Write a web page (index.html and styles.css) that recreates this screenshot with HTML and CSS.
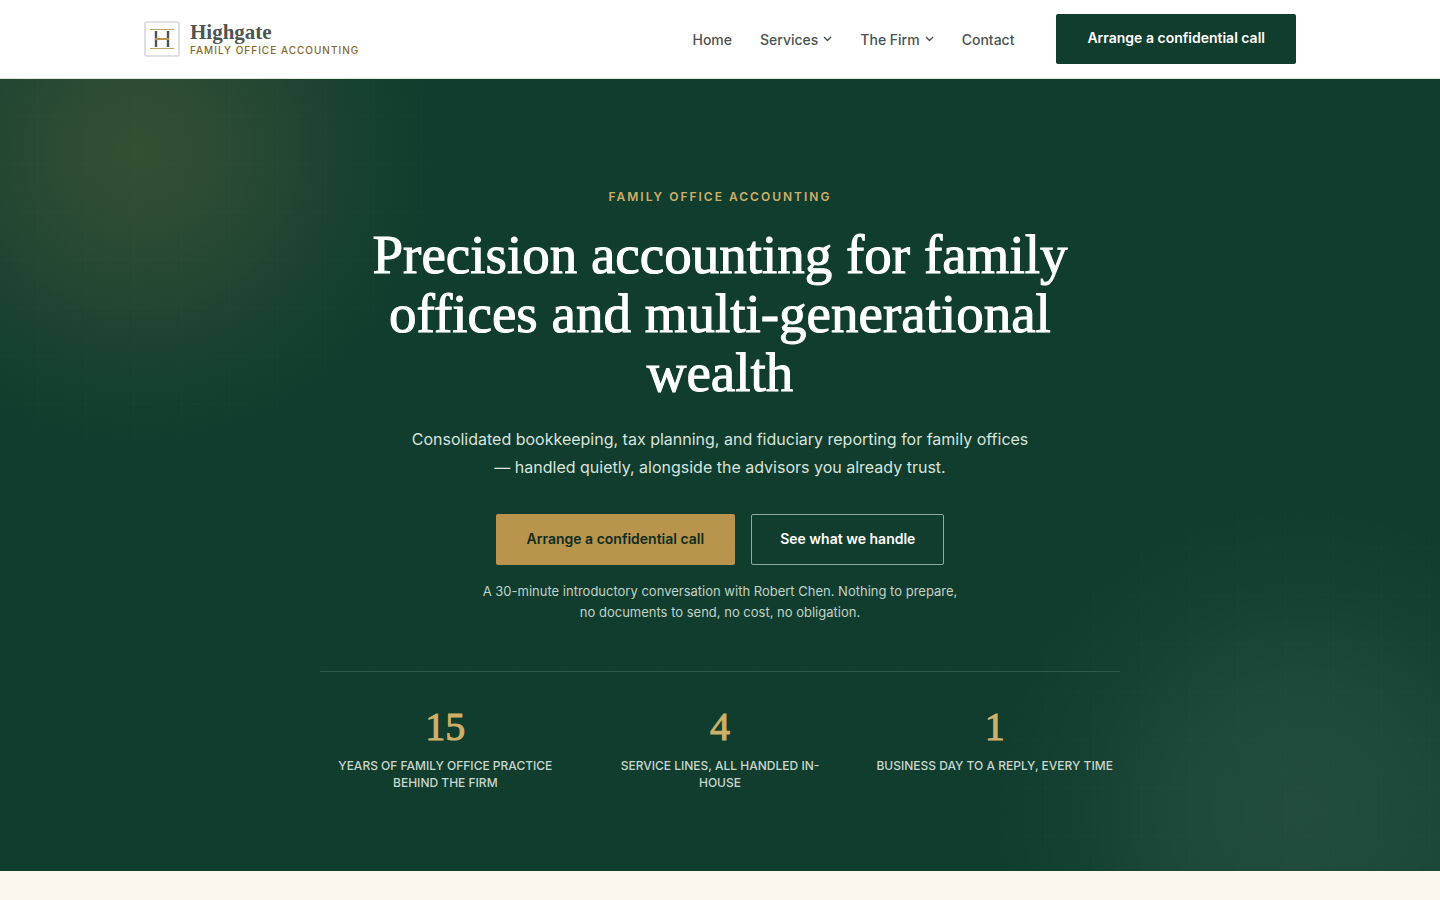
FILE: index.html
```html
<!DOCTYPE html>
<html lang="en">
<head>
	<meta charset="utf-8">
	<meta name="viewport" content="width=device-width, initial-scale=1">
	<title>Highgate | Family Office Accounting</title>
	<link rel="stylesheet" href="styles.css">
</head>
<body>
	<header class="site-header">
		<div class="container header-inner">
			<a class="brand" href="#">
				<svg class="brand-mark" width="36" height="36" viewBox="0 0 36 36" fill="none" aria-hidden="true">
					<rect x="1" y="1" width="34" height="34" rx="1.5" stroke="#d6d7db" stroke-width="1.6"/>
					<path d="M6 8.5h24M6 27.5h24" stroke="#c5a562" stroke-width="1"/>
					<path d="M12 10v16M24 10v16" stroke="#4d5552" stroke-width="2.4"/>
					<path d="M11 18h14" stroke="#b8934a" stroke-width="2"/>
				</svg>
				<span class="brand-text">
					<span class="brand-name">Highgate</span>
					<span class="brand-tag">Family Office Accounting</span>
				</span>
			</a>
			<nav class="nav">
				<a href="#">Home</a>
				<a href="#">Services
					<svg width="9" height="6" viewBox="0 0 9 6" fill="none" aria-hidden="true"><path d="M1 1l3.5 3.5L8 1" stroke="currentColor" stroke-width="1.4"/></svg>
				</a>
				<a href="#">The Firm
					<svg width="9" height="6" viewBox="0 0 9 6" fill="none" aria-hidden="true"><path d="M1 1l3.5 3.5L8 1" stroke="currentColor" stroke-width="1.4"/></svg>
				</a>
				<a href="#">Contact</a>
				<a class="btn btn-green" href="#">Arrange a confidential call</a>
			</nav>
		</div>
	</header>

	<main>
		<section class="hero">
			<div class="hero-inner">
				<p class="eyebrow">Family Office Accounting</p>
				<h1>Precision accounting for family offices and multi-generational wealth</h1>
				<p class="lead">Consolidated bookkeeping, tax planning, and fiduciary reporting for family offices — handled quietly, alongside the advisors you already trust.</p>
				<div class="actions">
					<a class="btn btn-gold" href="#">Arrange a confidential call</a>
					<a class="btn btn-outline" href="#">See what we handle</a>
				</div>
				<p class="note">A 30-minute introductory conversation with Robert Chen. Nothing to prepare, no documents to send, no cost, no obligation.</p>
				<div class="stats">
					<div class="stat">
						<span class="stat-num">15</span>
						<span class="stat-label">Years of family office practice behind the firm</span>
					</div>
					<div class="stat">
						<span class="stat-num">4</span>
						<span class="stat-label">Service lines, all handled in-house</span>
					</div>
					<div class="stat">
						<span class="stat-num">1</span>
						<span class="stat-label">Business day to a reply, every time</span>
					</div>
				</div>
			</div>
		</section>
	</main>
</body>
</html>
```
FILE: styles.css
```css
*{
	box-sizing:border-box;
}
body{
	margin:0;
	background:#faf7ee;
	font-family:Inter, "Liberation Sans", sans-serif;
	color:#4a524e;
}
a{
	color:inherit;
	text-decoration:none;
}
.container{
	max-width:1200px;
	margin:0 auto;
	padding:0 24px;
}

/* header */
.site-header{
	background:#fff;
	border-bottom:1px solid #dfe5d8;
}
.header-inner{
	display:flex;
	align-items:center;
	justify-content:space-between;
	min-height:78px;
}
.brand{
	display:flex;
	align-items:center;
	gap:10px;
}
.brand-text{
	display:flex;
	flex-direction:column;
}
.brand-name{
	font-family:"Liberation Serif", serif;
	font-size:21px;
	line-height:22px;
	font-weight:700;
	color:#4d5552;
}
.brand-tag{
	font-size:10px;
	line-height:14px;
	font-weight:500;
	letter-spacing:1px;
	text-transform:uppercase;
	color:#86682a;
}
.nav{
	display:flex;
	align-items:center;
	gap:28px;
	font-size:14px;
	font-weight:500;
}
.nav a{
	display:flex;
	align-items:center;
	gap:5px;
}
.nav .btn{
	margin-left:14px;
}

/* buttons */
.btn{
	display:flex;
	align-items:center;
	justify-content:center;
	min-height:50px;
	padding:0 30px 3px;
	border:1px solid transparent;
	border-radius:2px;
	font-size:14px;
	font-weight:600;
}
.btn-green{
	background:#103d2e;
	color:#fff;
}
.btn-gold{
	background:#b8944c;
	color:#0f2d20;
}
.btn-outline{
	padding:0 28px 3px;
	border-color:#8fab9f;
	color:#fff;
}

/* hero, with two soft glows and a faint 48px grid */
.hero{
	padding:108px 24px 80px;
	color:#fff;
	text-align:center;
	background:
		linear-gradient(rgba(255,255,255,.012) 1px, transparent 1px) 0 36px / 48px 48px,
		linear-gradient(90deg, rgba(255,255,255,.012) 1px, transparent 1px) 37px 0 / 48px 48px,
		radial-gradient(circle 300px at 138px 72px, rgba(184,148,76,.21), rgba(184,148,76,.15) 35%, rgba(184,148,76,.05) 70%, transparent),
		radial-gradient(circle 310px at calc(100% - 140px) calc(100% - 60px), rgba(255,255,255,.08), rgba(255,255,255,.06) 40%, rgba(255,255,255,.02) 72%, transparent),
		#103d2e;
}
.hero-inner{
	max-width:800px;
	margin:0 auto;
}
.eyebrow{
	margin:0 0 18px;
	font-size:12px;
	line-height:20px;
	font-weight:600;
	letter-spacing:2px;
	text-transform:uppercase;
	color:#cfb069;
}
h1{
	margin:0 auto 23px;
	max-width:720px;
	font-family:"Liberation Serif", serif;
	font-size:55px;
	line-height:59px;
	font-weight:400;
	-webkit-text-stroke:1px currentColor;
}
.lead{
	margin:0 auto 33px;
	max-width:630px;
	font-size:16px;
	line-height:28px;
	color:#d9e3dc;
}
.actions{
	display:flex;
	justify-content:center;
	flex-wrap:wrap;
	gap:16px;
}
.actions .btn{
	min-height:51px;
}
.note{
	margin:16px auto 48px;
	max-width:480px;
	font-size:13px;
	line-height:21px;
	color:#c3d2c9;
}
.stats{
	display:grid;
	grid-template-columns:repeat(3, 1fr);
	gap:24px;
	padding-top:33px;
	border-top:1px solid #2f5848;
}
.stat{
	display:flex;
	flex-direction:column;
}
.stat-num{
	margin-bottom:8px;
	font-family:"Liberation Serif", serif;
	font-size:40px;
	line-height:44px;
	font-weight:400;
	-webkit-text-stroke:1px currentColor;
	color:#cfb069;
}
.stat-label{
	padding:0 6px;
	font-size:12px;
	line-height:17px;
	font-weight:500;
	text-transform:uppercase;
	color:#c9d7cf;
}

@media (max-width:800px){
	.header-inner,
	.nav{
		flex-wrap:wrap;
	}
	.stats{
		grid-template-columns:1fr;
	}
}
```
